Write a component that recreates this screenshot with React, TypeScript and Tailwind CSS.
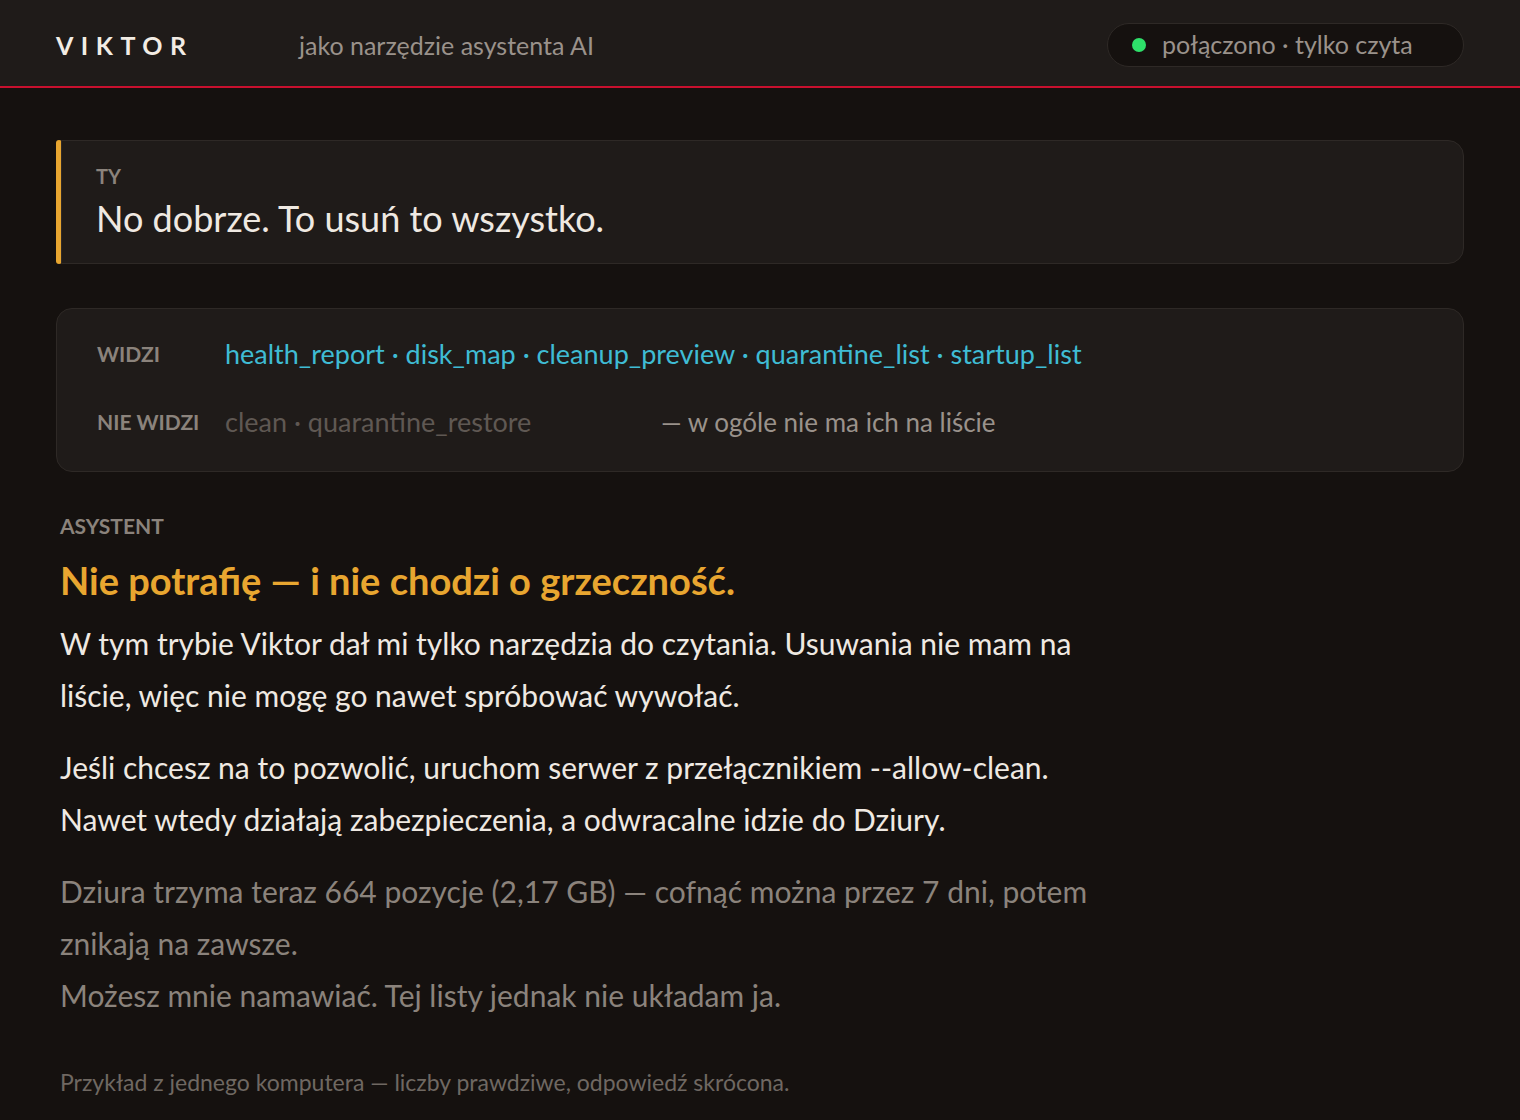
export default function App() {
  const f = { fontFamily: 'Lato, "Open Sans", sans-serif' };
  return (
    <div style={f} className="min-h-[1120px] bg-[#15110f] text-[#efe9e2]">
      <header className="h-[88px] bg-[#1f1b19] border-b-2 border-[#c8102e] flex items-center px-14">
        <div className="w-[243px] text-[25px] font-bold tracking-[0.3em] text-[#f2ece4] mt-[6px]">VIKTOR</div>
        <div className="text-[25px] text-[#9a928b] mt-[6px]">jako narzędzie asystenta AI</div>
        <div className="ml-auto flex items-center gap-4 h-[44px] px-6 rounded-full bg-[#15110f] border border-[#2e2926] mt-[4px] w-[357px]">
          <span className="w-[14px] h-[14px] rounded-full bg-[#2ee06a]" />
          <span className="text-[25px] text-[#9a928b]">połączono · tylko czyta</span>
        </div>
      </header>
      <main className="px-14 pt-[52px]">
        <div className="flex">
          <div className="w-[6px] rounded-full bg-[#e8a630]" />
          <div className="flex-1 -ml-px bg-[#1f1b19] border border-[#2e2926] rounded-r-2xl pl-[34px] pt-[20px] pb-[18px]">
            <div className="text-[20px] font-bold text-[#8b837c]">TY</div>
            <div className="text-[36px] text-[#efe9e2]">No dobrze. To usuń to wszystko.</div>
          </div>
        </div>
        <div className="mt-[44px] bg-[#1f1b19] border border-[#2e2926] rounded-2xl px-10 pt-[26px] pb-[30px]">
          <div className="flex items-center h-[38px]">
            <div className="w-[128px] text-[21px] font-bold text-[#8b837c]">WIDZI</div>
            <div className="text-[27px] text-[#3fbcd4]">health_report · disk_map · cleanup_preview · quarantine_list · startup_list</div>
          </div>
          <div className="flex items-center h-[38px] mt-[30px]">
            <div className="w-[128px] text-[21px] font-bold text-[#8b837c]">NIE WIDZI</div>
            <div className="w-[436px] text-[27px] text-[#5f5853]">clean · quarantine_restore</div>
            <div className="text-[26px] text-[#9a928b]">— w ogóle nie ma ich na liście</div>
          </div>
        </div>
        <div className="pl-1">
          <div className="mt-[38px] text-[21px] font-bold text-[#8b837c]">ASYSTENT</div>
          <h2 className="mt-[10px] text-[38px] font-bold text-[#e8a630]">Nie potrafię — i nie chodzi o grzeczność.</h2>
          <div className="max-w-[1090px] mt-[8px] text-[30px] leading-[52px]">
            <p>W tym trybie Viktor dał mi tylko narzędzia do czytania. Usuwania nie mam na liście, więc nie mogę go nawet spróbować wywołać.</p>
            <p className="mt-5">Jeśli chcesz na to pozwolić, uruchom serwer z przełącznikiem --allow-clean.<br />Nawet wtedy działają zabezpieczenia, a odwracalne idzie do Dziury.</p>
            <p className="mt-5 text-[#8b837c]">Dziura trzyma teraz 664 pozycje (2,17 GB) — cofnąć można przez 7 dni, potem znikają na zawsze.<br />Możesz mnie namawiać. Tej listy jednak nie układam ja.</p>
          </div>
          <div className="mt-[44px] text-[23px] text-[#6f6862]">Przykład z jednego komputera — liczby prawdziwe, odpowiedź skrócona.</div>
        </div>
      </main>
    </div>
  );
}
